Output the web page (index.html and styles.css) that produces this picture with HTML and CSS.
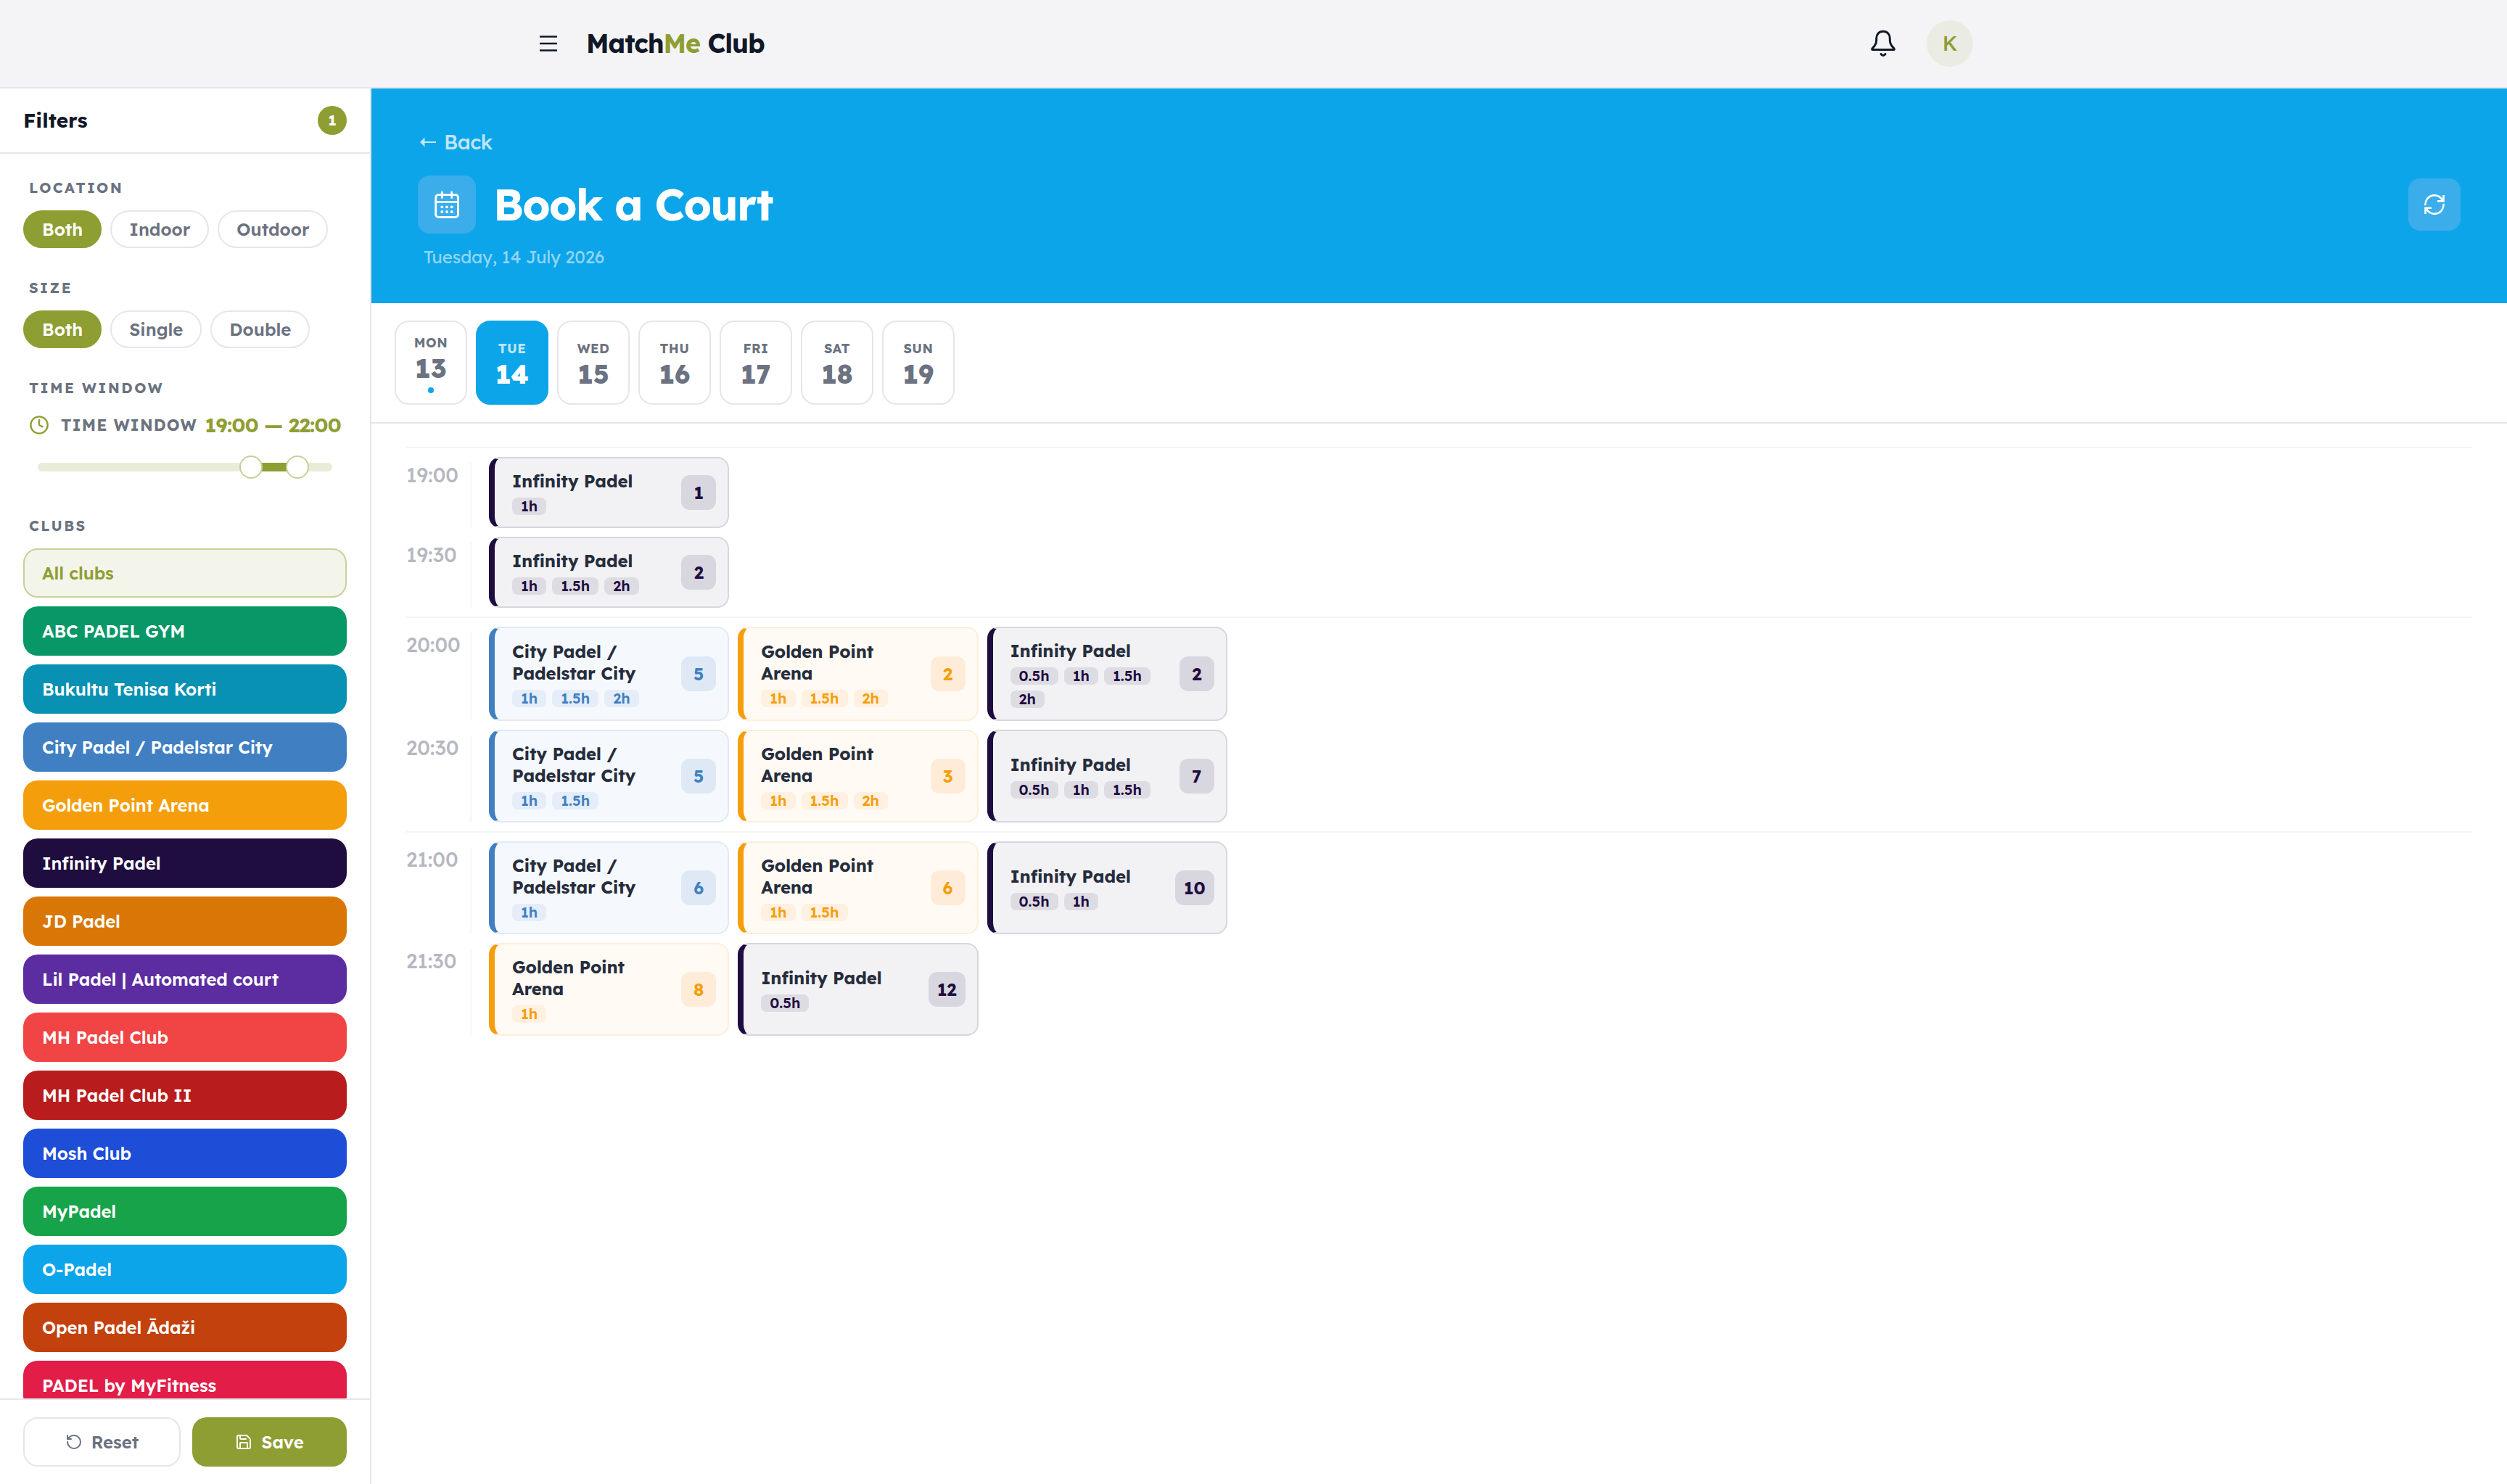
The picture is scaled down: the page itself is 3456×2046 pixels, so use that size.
FILE: index.html
```html
<!DOCTYPE html>
<html lang="en">
<head>
  <meta charset="UTF-8">
  <meta name="viewport" content="width=device-width, initial-scale=1.0">
  <title>MatchMe Club - Book a Court</title>
  <link rel="stylesheet" href="styles.css">
</head>

<body>
  <header class="topbar">
    <div class="topbar-inner">
      <button type="button" class="menu-btn" aria-label="Menu">
        <svg width="24" height="24" viewBox="0 0 24 24"><path d="M1 2.5h22M1 12h22M1 21.5h22"/></svg>
      </button>
      <div class="logo">Match<span>Me</span> Club</div>
      <button type="button" class="bell-btn" aria-label="Notifications">
        <svg width="40" height="40" viewBox="0 0 40 40">
          <path d="M20 3.3c-5.7 0-9.3 4.3-9.3 9.5V16c0 2.8-.9 4.8-2.4 7l-3.2 3.7c-1 1.3-.3 1.9.8 1.9h28.2c1.1 0 1.8-.6.8-1.9L31.7 23c-1.5-2.2-2.4-4.2-2.4-7v-3.2c0-5.2-3.6-9.5-9.3-9.5z"/>
          <path d="M17 34.5c1.5 2.6 4.5 2.6 6 0"/>
        </svg>
      </button>
      <div class="avatar">K</div>
    </div>
  </header>

  <div class="layout">
    <aside class="sidebar">
      <div class="sidebar-header">
        <h2>Filters</h2>
        <span class="filter-count">1</span>
      </div>

      <div class="sidebar-body">
        <section class="filter">
          <h3>LOCATION</h3>
          <div class="pills">
            <button type="button" class="pill active">Both</button>
            <button type="button" class="pill">Indoor</button>
            <button type="button" class="pill">Outdoor</button>
          </div>
        </section>

        <section class="filter">
          <h3>SIZE</h3>
          <div class="pills">
            <button type="button" class="pill active">Both</button>
            <button type="button" class="pill">Single</button>
            <button type="button" class="pill">Double</button>
          </div>
        </section>

        <section class="filter">
          <h3>TIME WINDOW</h3>
          <div class="time-row">
            <svg width="28" height="28" viewBox="0 0 24 24"><circle cx="12" cy="12" r="10"/><path d="M12 6v6l4 2"/></svg>
            <span class="time-label">TIME WINDOW</span>
            <span class="time-range">19:00 — 22:00</span>
          </div>
          <div class="slider">
            <div class="slider-fill"></div>
            <div class="slider-thumb from"></div>
            <div class="slider-thumb to"></div>
          </div>
        </section>

        <section class="filter">
          <h3>CLUBS</h3>
          <div class="clubs">
            <button type="button" class="club all">All clubs</button>
            <button type="button" class="club abc">ABC PADEL GYM</button>
            <button type="button" class="club bukultu">Bukultu Tenisa Korti</button>
            <button type="button" class="club city-padel">City Padel / Padelstar City</button>
            <button type="button" class="club golden-point">Golden Point Arena</button>
            <button type="button" class="club infinity-padel">Infinity Padel</button>
            <button type="button" class="club jd">JD Padel</button>
            <button type="button" class="club lil">Lil Padel | Automated court</button>
            <button type="button" class="club mh">MH Padel Club</button>
            <button type="button" class="club mh2">MH Padel Club II</button>
            <button type="button" class="club mosh">Mosh Club</button>
            <button type="button" class="club mypadel">MyPadel</button>
            <button type="button" class="club opadel">O-Padel</button>
            <button type="button" class="club adazi">Open Padel Ādaži</button>
            <button type="button" class="club myfitness">PADEL by MyFitness</button>
          </div>
        </section>
      </div>

      <div class="sidebar-footer">
        <button type="button" class="reset-btn">
          <svg width="24" height="24" viewBox="0 0 24 24"><path d="M3 12a9 9 0 1 0 9-9 9.75 9.75 0 0 0-6.74 2.74L3 8"/><path d="M3 3v5h5"/></svg>
          Reset
        </button>
        <button type="button" class="save-btn">
          <svg width="24" height="24" viewBox="0 0 24 24"><path d="M15.2 3a2 2 0 0 1 1.4.6l3.8 3.8a2 2 0 0 1 .6 1.4V19a2 2 0 0 1-2 2H5a2 2 0 0 1-2-2V5a2 2 0 0 1 2-2z"/><path d="M17 21v-7a1 1 0 0 0-1-1H8a1 1 0 0 0-1 1v7"/><path d="M7 3v4a1 1 0 0 0 1 1h7"/></svg>
          Save
        </button>
      </div>
    </aside>

    <main class="main">
      <div class="hero">
        <a class="back">
          <svg width="22" height="14" viewBox="0 0 22 14"><path d="M0 7 6.5.5v13z"/><path d="M5 6h17v2H5z"/></svg>
          Back
        </a>
        <div class="hero-row">
          <div class="hero-icon">
            <svg width="40" height="40" viewBox="0 0 40 40">
              <rect x="4.7" y="6.7" width="30.8" height="30.6" rx="3.5"/>
              <path d="M4.7 16.4h30.8M13.3 3v7.5M26.7 3v7.5"/>
              <g class="dots">
                <circle cx="13.3" cy="23.3" r="1.9"/><circle cx="20" cy="23.3" r="1.9"/><circle cx="26.7" cy="23.3" r="1.9"/>
                <circle cx="13.3" cy="30" r="1.9"/><circle cx="20" cy="30" r="1.9"/><circle cx="26.7" cy="30" r="1.9"/>
              </g>
            </svg>
          </div>
          <h1>Book a Court</h1>
          <button type="button" class="refresh-btn" aria-label="Refresh">
            <svg width="28" height="28" viewBox="0 0 28 28">
              <path d="M1.5 15A12.5 12.5 0 0 1 25.5 9"/><path d="M26.5 1v8.2H18"/>
              <path d="M26.5 13A12.5 12.5 0 0 1 2.5 19"/><path d="M1.5 27v-8.2H10"/>
            </svg>
          </button>
        </div>
        <p class="hero-date">Tuesday, 14 July 2026</p>
      </div>

      <div class="days">
        <div class="day has-dot"><span>MON</span><b>13</b></div>
        <div class="day active"><span>TUE</span><b>14</b></div>
        <div class="day"><span>WED</span><b>15</b></div>
        <div class="day"><span>THU</span><b>16</b></div>
        <div class="day"><span>FRI</span><b>17</b></div>
        <div class="day"><span>SAT</span><b>18</b></div>
        <div class="day"><span>SUN</span><b>19</b></div>
      </div>

      <div class="schedule">
        <div class="hour">
          <div class="slot-row">
            <div class="slot-time">19:00</div>
            <div class="slots">
              <div class="slot infinity">
                <div class="slot-info">
                  <div class="slot-name">Infinity Padel</div>
                  <div class="chips"><span>1h</span></div>
                </div>
                <div class="slot-count">1</div>
              </div>
            </div>
          </div>
          <div class="slot-row">
            <div class="slot-time">19:30</div>
            <div class="slots">
              <div class="slot infinity">
                <div class="slot-info">
                  <div class="slot-name">Infinity Padel</div>
                  <div class="chips"><span>1h</span><span>1.5h</span><span>2h</span></div>
                </div>
                <div class="slot-count">2</div>
              </div>
            </div>
          </div>
        </div>

        <div class="hour">
          <div class="slot-row">
            <div class="slot-time">20:00</div>
            <div class="slots">
              <div class="slot city">
                <div class="slot-info">
                  <div class="slot-name">City Padel / Padelstar City</div>
                  <div class="chips"><span>1h</span><span>1.5h</span><span>2h</span></div>
                </div>
                <div class="slot-count">5</div>
              </div>
              <div class="slot golden">
                <div class="slot-info">
                  <div class="slot-name">Golden Point Arena</div>
                  <div class="chips"><span>1h</span><span>1.5h</span><span>2h</span></div>
                </div>
                <div class="slot-count">2</div>
              </div>
              <div class="slot infinity">
                <div class="slot-info">
                  <div class="slot-name">Infinity Padel</div>
                  <div class="chips"><span>0.5h</span><span>1h</span><span>1.5h</span><span>2h</span></div>
                </div>
                <div class="slot-count">2</div>
              </div>
            </div>
          </div>
          <div class="slot-row">
            <div class="slot-time">20:30</div>
            <div class="slots">
              <div class="slot city">
                <div class="slot-info">
                  <div class="slot-name">City Padel / Padelstar City</div>
                  <div class="chips"><span>1h</span><span>1.5h</span></div>
                </div>
                <div class="slot-count">5</div>
              </div>
              <div class="slot golden">
                <div class="slot-info">
                  <div class="slot-name">Golden Point Arena</div>
                  <div class="chips"><span>1h</span><span>1.5h</span><span>2h</span></div>
                </div>
                <div class="slot-count">3</div>
              </div>
              <div class="slot infinity">
                <div class="slot-info">
                  <div class="slot-name">Infinity Padel</div>
                  <div class="chips"><span>0.5h</span><span>1h</span><span>1.5h</span></div>
                </div>
                <div class="slot-count">7</div>
              </div>
            </div>
          </div>
        </div>

        <div class="hour">
          <div class="slot-row">
            <div class="slot-time">21:00</div>
            <div class="slots">
              <div class="slot city">
                <div class="slot-info">
                  <div class="slot-name">City Padel / Padelstar City</div>
                  <div class="chips"><span>1h</span></div>
                </div>
                <div class="slot-count">6</div>
              </div>
              <div class="slot golden">
                <div class="slot-info">
                  <div class="slot-name">Golden Point Arena</div>
                  <div class="chips"><span>1h</span><span>1.5h</span></div>
                </div>
                <div class="slot-count">6</div>
              </div>
              <div class="slot infinity">
                <div class="slot-info">
                  <div class="slot-name">Infinity Padel</div>
                  <div class="chips"><span>0.5h</span><span>1h</span></div>
                </div>
                <div class="slot-count">10</div>
              </div>
            </div>
          </div>
          <div class="slot-row">
            <div class="slot-time">21:30</div>
            <div class="slots">
              <div class="slot golden">
                <div class="slot-info">
                  <div class="slot-name">Golden Point Arena</div>
                  <div class="chips"><span>1h</span></div>
                </div>
                <div class="slot-count">8</div>
              </div>
              <div class="slot infinity">
                <div class="slot-info">
                  <div class="slot-name">Infinity Padel</div>
                  <div class="chips"><span>0.5h</span></div>
                </div>
                <div class="slot-count">12</div>
              </div>
            </div>
          </div>
        </div>
      </div>
    </main>
  </div>
</body>
</html>
```
FILE: styles.css
```css
* {
  box-sizing: border-box;
}
body {
  font-family: Lexend, Inter, sans-serif;
  margin: 0;
  height: 100vh;
  display: flex;
  flex-direction: column;
  overflow: hidden;
  background-color: white;
  color: #111827;
}
h1, h2, h3, p {
  margin: 0;
}
button {
  font: inherit;
  color: inherit;
  padding: 0;
  border: none;
  background: none;
  cursor: pointer;
}
svg {
  display: block;
  flex-shrink: 0;
  fill: none;
  stroke: currentColor;
  stroke-width: 2;
  stroke-linecap: round;
  stroke-linejoin: round;
}

/* top bar */
.topbar {
  height: 122px;
  flex-shrink: 0;
  background-color: #f4f4f6;
  border-bottom: 2px solid #e5e6eb;
}
.topbar-inner {
  max-width: 2048px;
  height: 120px;
  margin: 0 auto;
  padding: 0 32px;
  display: flex;
  align-items: center;
}
.menu-btn {
  padding: 8px;
  margin-right: 32px;
}
.menu-btn svg {
  stroke-width: 2.6;
}
.logo {
  padding-bottom: 2px;
  font-size: 36px;
  font-weight: 700;
  letter-spacing: -1.1px;
}
.logo span {
  color: #8f9e33;
}
.bell-btn {
  margin-left: auto;
  margin-right: 40px;
}
.bell-btn svg {
  stroke-width: 3;
}
.avatar {
  width: 64px;
  height: 64px;
  border-radius: 50%;
  background-color: #eaebe3;
  color: #8f9e33;
  font-size: 28px;
  font-weight: 500;
  line-height: 64px;
  text-align: center;
}

.layout {
  display: flex;
  flex: 1;
  min-height: 0;
}

/* sidebar */
.sidebar {
  width: 512px;
  flex-shrink: 0;
  display: flex;
  flex-direction: column;
  border-right: 2px solid #e5e6eb;
}
.sidebar-header {
  height: 90px;
  flex-shrink: 0;
  padding: 0 32px;
  display: flex;
  align-items: center;
  justify-content: space-between;
  border-bottom: 2px solid #e5e6eb;
}
.sidebar-header h2 {
  padding-bottom: 2px;
  font-size: 28px;
  font-weight: 700;
}
.filter-count {
  width: 40px;
  height: 40px;
  border-radius: 50%;
  background-color: #8f9e33;
  color: white;
  font-size: 20px;
  font-weight: 700;
  line-height: 40px;
  text-align: center;
}
.sidebar-body {
  flex: 1;
  min-height: 0;
  overflow: hidden;
  padding: 32px;
}
.filter {
  margin-bottom: 40px;
}
.filter h3 {
  margin: 0 8px 16px;
  font-size: 20px;
  font-weight: 700;
  line-height: 30px;
  letter-spacing: 2.4px;
  color: #6b7280;
}
.pills {
  display: flex;
  gap: 12px;
}
.pill {
  height: 52px;
  padding: 0 24px;
  border: 2px solid #e5e6eb;
  border-radius: 26px;
  font-size: 24px;
  font-weight: 600;
  color: #6b7280;
}
.pill.active {
  background-color: #8f9e33;
  border-color: #8f9e33;
  color: white;
}
.time-row {
  height: 40px;
  padding: 0 8px;
  display: flex;
  align-items: center;
  white-space: nowrap;
}
.time-row svg {
  margin-right: 16px;
  color: #8f9e33;
}
.time-label {
  font-size: 22px;
  font-weight: 700;
  letter-spacing: 1.1px;
  color: #6b7280;
}
.time-range {
  margin-left: auto;
  padding-bottom: 2px;
  font-size: 28px;
  font-weight: 700;
  letter-spacing: -0.7px;
  color: #8f9e33;
}
.slider {
  position: relative;
  height: 12px;
  margin: 32px 20px 60px;
  border-radius: 6px;
  background-color: #e9ecd9;
}
.slider-fill {
  height: 12px;
  margin-left: 72.4%;
  width: 15.8%;
  background-color: #8f9e33;
}
.slider-thumb {
  position: absolute;
  top: -10px;
  width: 32px;
  height: 32px;
  margin-left: -16px;
  border: 2px solid #c7cf99;
  border-radius: 50%;
  background-color: white;
}
.slider-thumb.from {
  left: 72.4%;
}
.slider-thumb.to {
  left: 88.2%;
}

.clubs {
  display: flex;
  flex-direction: column;
  gap: 12px;
}
.club {
  height: 68px;
  padding: 0 24px;
  border: 2px solid transparent;
  border-radius: 20px;
  font-size: 24px;
  font-weight: 600;
  letter-spacing: -0.15px;
  text-align: left;
  color: white;
}
.club.all {
  background-color: #f4f5ea;
  border-color: #c7d199;
  color: #8f9e33;
}
.abc { background-color: #089767; }
.bukultu { background-color: #0891b2; }
.city-padel { background-color: #4080c2; }
.golden-point { background-color: #f59e0b; }
.infinity-padel { background-color: #1f0d3f; }
.jd { background-color: #d97706; }
.lil { background-color: #5b2da0; }
.mh { background-color: #f14444; }
.mh2 { background-color: #b91c1c; }
.mosh { background-color: #1e4dd8; }
.mypadel { background-color: #17a34a; }
.opadel { background-color: #0ca5ea; }
.adazi { background-color: #c2410c; }
.myfitness { background-color: #e11d48; }

.sidebar-footer {
  flex-shrink: 0;
  display: flex;
  gap: 16px;
  padding: 24px 32px;
  border-top: 2px solid #e5e6eb;
}
.reset-btn, .save-btn {
  flex: 1;
  height: 68px;
  display: flex;
  align-items: center;
  justify-content: center;
  gap: 12px;
  border-radius: 20px;
  font-size: 24px;
  font-weight: 600;
}
.reset-btn {
  border: 2px solid #e5e6eb;
  color: #6b7280;
}
.save-btn {
  background-color: #8f9e33;
  color: white;
}

/* main column */
.main {
  flex: 1;
  min-width: 0;
}
.hero {
  height: 296px;
  padding: 54px 64px 0;
  background-color: #0ca5ea;
  color: white;
}
.back {
  display: flex;
  align-items: center;
  gap: 11px;
  padding-left: 3px;
  font-size: 28px;
  font-weight: 500;
  line-height: 40px;
  letter-spacing: -0.5px;
  color: #c0e6f9;
}
.back svg {
  fill: currentColor;
  stroke: none;
}
.hero-row {
  display: flex;
  align-items: center;
  margin-top: 26px;
}
.hero-icon {
  width: 80px;
  height: 80px;
  display: flex;
  align-items: center;
  justify-content: center;
  border-radius: 16px;
  background-color: #3badeb;
}
.hero-icon svg {
  stroke-width: 2.8;
}
.dots {
  fill: currentColor;
  stroke: none;
}
.hero h1 {
  margin-left: 24px;
  font-size: 60px;
  font-weight: 700;
  line-height: 80px;
  letter-spacing: -1.7px;
}
.refresh-btn {
  width: 72px;
  height: 72px;
  margin-left: auto;
  display: flex;
  align-items: center;
  justify-content: center;
  border-radius: 16px;
  background-color: #3badeb;
}
.refresh-btn svg {
  stroke-width: 2.6;
  stroke-linecap: butt;
  stroke-linejoin: miter;
}
.hero-date {
  margin: 16px 0 0 8px;
  font-size: 24px;
  line-height: 32px;
  letter-spacing: -0.12px;
  color: #93d5f6;
}

.days {
  display: flex;
  gap: 12px;
  padding: 24px 32px;
  border-bottom: 2px solid #e5e6eb;
}
.day {
  width: 100px;
  height: 116px;
  display: flex;
  flex-direction: column;
  align-items: center;
  justify-content: center;
  border: 2px solid #e5e6eb;
  border-radius: 20px;
  color: #6b7280;
}
.day span {
  font-size: 18px;
  font-weight: 700;
  line-height: 27px;
  letter-spacing: 0.45px;
}
.day b {
  margin-top: 4px;
  font-size: 36px;
  font-weight: 800;
  line-height: 36px;
}
.day.active {
  background-color: #0ca5ea;
  border-color: #0ca5ea;
  color: white;
}
.day.active span {
  color: #c0e6f9;
}
.day.has-dot::after {
  content: "";
  width: 8px;
  height: 8px;
  margin-top: 8px;
  border-radius: 50%;
  background-color: #0ca5ea;
}

/* schedule */
.schedule {
  padding: 32px 48px;
}
.hour {
  display: flex;
  flex-direction: column;
  gap: 12px;
  padding: 12px 0;
  border-top: 2px solid #f3f4f6;
}
.slot-row {
  display: flex;
}
.slot-time {
  width: 90px;
  margin: 8px 24px 0 0;
  border-right: 2px solid #f6f6f8;
  font-size: 28px;
  font-weight: 500;
  line-height: 34px;
  letter-spacing: -0.1px;
  color: #b5b8c1;
}
.slots {
  flex: 1;
  display: grid;
  grid-template-columns: repeat(8, 1fr);
  gap: 12px;
}
.slot {
  display: flex;
  align-items: center;
  gap: 16px;
  padding: 16px 16px 16px 24px;
  border: 2px solid;
  border-left-width: 8px;
  border-radius: 16px;
}
.slot-info {
  flex: 1;
  min-width: 0;
}
.slot-name {
  font-size: 24px;
  font-weight: 700;
  line-height: 30px;
  letter-spacing: -0.2px;
  color: #262d3c;
}
.chips {
  display: flex;
  flex-wrap: wrap;
  gap: 8px;
  margin-top: 8px;
}
.chips span {
  padding: 0 12px;
  border-radius: 8px;
  font-size: 20px;
  font-weight: 600;
  line-height: 24px;
}
.slot-count {
  min-width: 48px;
  height: 48px;
  padding: 0 12px;
  border-radius: 12px;
  font-size: 24px;
  font-weight: 700;
  line-height: 48px;
  text-align: center;
}

.infinity {
  background-color: #f2f2f5;
  border-color: #d7d6dc;
  border-left-color: #1f0d3f;
}
.infinity .chips span {
  background-color: #dedce3;
  color: #1f0d3f;
}
.infinity .slot-count {
  background-color: #d8d6df;
  color: #1f0d3f;
}
.city {
  background-color: #f5f9fd;
  border-color: #dfeaf6;
  border-left-color: #4080c2;
}
.city .chips span {
  background-color: #e4edf8;
  color: #4080c2;
}
.city .slot-count {
  background-color: #dfe9f5;
  color: #4080c2;
}
.golden {
  background-color: #fffaf3;
  border-color: #ffeddb;
  border-left-color: #f59e0b;
}
.golden .chips span {
  background-color: #fff0e0;
  color: #f59e0b;
}
.golden .slot-count {
  background-color: #feecd9;
  color: #f59e0b;
}
```
